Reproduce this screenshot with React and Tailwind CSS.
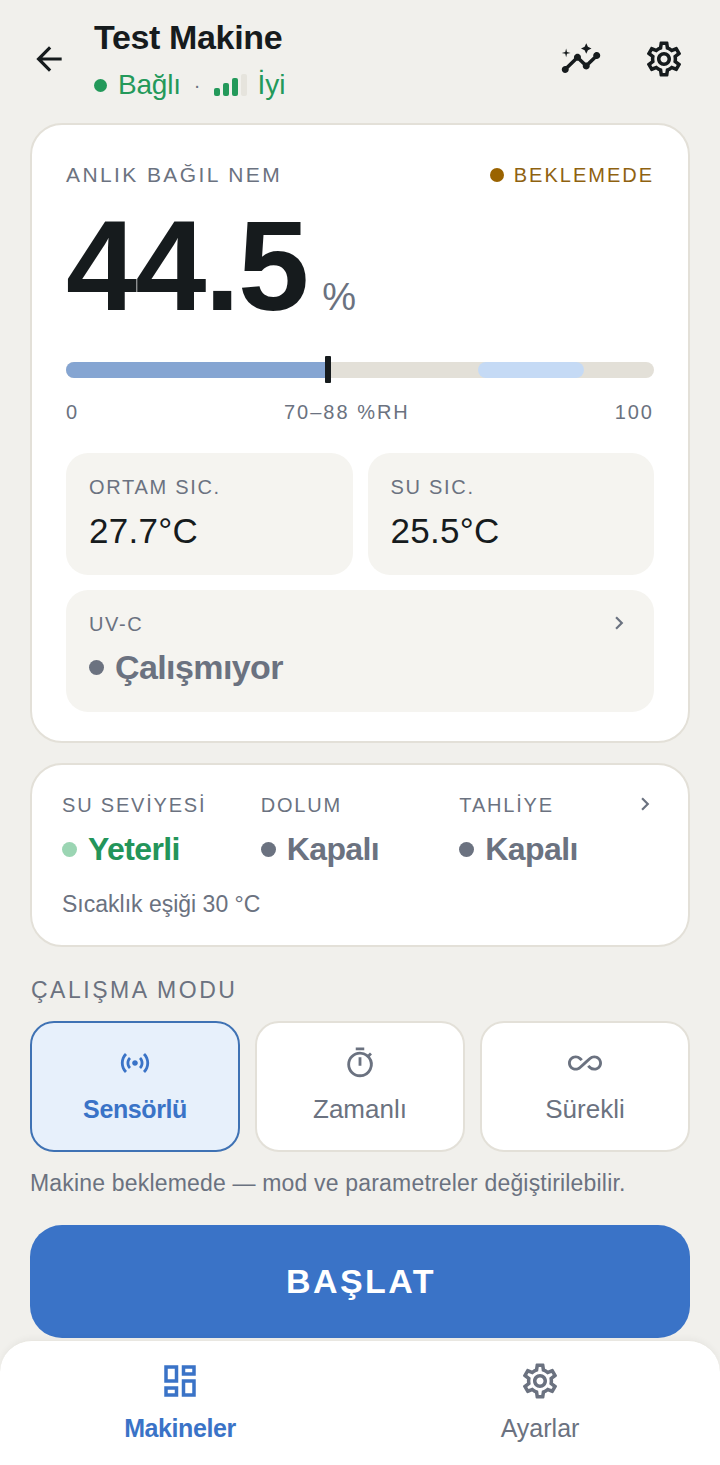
import { MdArrowBack, MdOutlineInsights, MdOutlineSettings, MdOutlineSensors, MdOutlineTimer, MdAllInclusive, MdOutlineDashboard, MdChevronRight } from 'react-icons/md'

const modes = [
  { label: 'Sensörlü', Icon: MdOutlineSensors, active: true },
  { label: 'Zamanlı', Icon: MdOutlineTimer },
  { label: 'Sürekli', Icon: MdAllInclusive },
]

function Status({ label, value, dot, color }) {
  return (
    <div className="flex-1">
      <p className="text-[20px] leading-[24px] tracking-[1.8px] text-[#6b7280]">{label}</p>
      <div className="mt-[13px] flex items-center gap-[11px]">
        <span className={`h-[15px] w-[15px] rounded-full ${dot}`} />
        <span className={`text-[32px] leading-[38px] font-semibold tracking-[-0.6px] ${color}`}>{value}</span>
      </div>
    </div>
  )
}

export default function App() {
  return (
    <div className="relative h-[1465px] w-[720px] overflow-hidden bg-[#f1f0ec] font-['Liberation_Sans',sans-serif] text-[#161b1d]">
      <header className="flex h-[123px] items-start pr-[35px] pl-[30px]">
        <MdArrowBack className="mt-[40px] h-[38px] w-[38px]" />
        <div className="ml-[26px] flex-1 pt-[16px]">
          <h1 className="text-[34px] leading-[42px] font-semibold tracking-[-0.35px]">Test Makine</h1>
          <div className="mt-[9px] flex items-center text-[#23995a]">
            <span className="h-[13px] w-[13px] rounded-full bg-[#23995a]" />
            <span className="ml-[11px] text-[28px] leading-[36px] tracking-[-0.2px]">Bağlı</span>
            <span className="mx-[13px] text-[20px] text-[#6b7280]">·</span>
            <span className="flex h-[22px] items-end gap-[3px]">
              <i className="h-[8px] w-[6px] rounded-[2px] bg-[#23995a]" />
              <i className="h-[13px] w-[6px] rounded-[2px] bg-[#23995a]" />
              <i className="h-[18px] w-[6px] rounded-[2px] bg-[#23995a]" />
              <i className="h-[22px] w-[6px] rounded-[2px] bg-[#e6e4dd]" />
            </span>
            <span className="ml-[11px] text-[28px] leading-[36px]">İyi</span>
          </div>
        </div>
        <MdOutlineInsights className="mt-[38px] h-[42px] w-[42px]" />
        <MdOutlineSettings className="mt-[38px] ml-[41px] h-[42px] w-[42px]" />
      </header>

      <main className="px-[30px]">
        <section className="h-[620px] rounded-[32px] border-2 border-[#e3e0d8] bg-white px-[34px] pt-[36px]">
          <div className="flex items-center justify-between">
            <span className="text-[21px] leading-[28px] tracking-[2.4px] text-[#6b7280]">ANLIK BAĞIL NEM</span>
            <span className="flex items-center gap-[10px] text-[20px] leading-[28px] tracking-[2px] text-[#8f6210]">
              <i className="h-[14px] w-[14px] rounded-full bg-[#9a6300]" />
              BEKLEMEDE
            </span>
          </div>
          <div className="mt-[9px] flex items-baseline">
            <span className="text-[128px] leading-[136px] font-bold tracking-[-2px]">44.5</span>
            <span className="ml-[15px] text-[38px] text-[#6b7280]">%</span>
          </div>

          <div className="relative mt-[28px] h-[16px] rounded-full bg-[#e3e0d8]">
            <div className="absolute inset-y-0 left-0 w-[262px] rounded-l-full bg-[#85a5d2]" />
            <div className="absolute inset-y-0 left-[412px] w-[106px] rounded-full bg-[#c5daf5]" />
            <div className="absolute top-[-6px] left-[259px] h-[27px] w-[6px] rounded-[1px] bg-[#161b1d]" />
          </div>
          <div className="mt-[21px] flex justify-between text-[20px] leading-[26px] tracking-[2px] text-[#6b7280]">
            <span>0</span>
            <span>70–88 %RH</span>
            <span>100</span>
          </div>

          <div className="mt-[28px] grid grid-cols-2 gap-[15px]">
            {[['ORTAM SIC.', '27.7°C'], ['SU SIC.', '25.5°C']].map(([label, value]) => (
              <div key={label} className="h-[122px] rounded-[22px] bg-[#f5f4f0] px-[23px] pt-[21px]">
                <p className="text-[20px] leading-[26px] tracking-[1.7px] text-[#6b7280]">{label}</p>
                <p className="mt-[9px] text-[35px] leading-[44px] tracking-[0.3px]">{value}</p>
              </div>
            ))}
          </div>

          <div className="relative mt-[15px] h-[122px] rounded-[22px] bg-[#f5f4f0] px-[23px] pt-[21px]">
            <p className="text-[20px] leading-[26px] tracking-[1.6px] text-[#6b7280]">UV-C</p>
            <MdChevronRight className="absolute top-[20px] right-[22px] h-[26px] w-[26px] text-[#6b7280]" />
            <div className="mt-[8px] flex items-center gap-[11px]">
              <span className="h-[15px] w-[15px] rounded-full bg-[#6b7280]" />
              <span className="text-[34px] leading-[44px] font-semibold tracking-[-0.6px] text-[#6b7280]">Çalışmıyor</span>
            </div>
          </div>
        </section>

        <section className="relative mt-[20px] h-[184px] rounded-[32px] border-2 border-[#e3e0d8] bg-white px-[30px] pt-[28px]">
          <div className="flex">
            <Status label="SU SEVİYESİ" value="Yeterli" dot="bg-[#9bd5b3]" color="text-[#23955a]" />
            <Status label="DOLUM" value="Kapalı" dot="bg-[#6b7280]" color="text-[#6b7280]" />
            <Status label="TAHLİYE" value="Kapalı" dot="bg-[#6b7280]" color="text-[#6b7280]" />
          </div>
          <MdChevronRight className="absolute top-[26px] right-[30px] h-[26px] w-[26px] text-[#6b7280]" />
          <p className="mt-[21px] text-[23px] leading-[30px] text-[#6b7280]">Sıcaklık eşiği 30 °C</p>
        </section>

        <h2 className="mt-[28px] pl-[1px] text-[23px] leading-[30px] tracking-[2.5px] text-[#6b7280]">ÇALIŞMA MODU</h2>
        <div className="mt-[16px] grid grid-cols-3 gap-[15px]">
          {modes.map(({ label, Icon, active }) => (
            <div
              key={label}
              className={`flex h-[131px] flex-col items-center rounded-[24px] border-2 pt-[23px] ${
                active ? 'border-[#3f72b4] bg-[#e7f0fb] text-[#3a73c7]' : 'border-[#e3e0d8] bg-white text-[#6b7280]'
              }`}
            >
              <Icon className="h-[34px] w-[34px]" />
              <span className={`mt-[12px] leading-[34px] ${active ? 'text-[25px] font-semibold tracking-[-0.4px]' : 'text-[26px]'}`}>{label}</span>
            </div>
          ))}
        </div>
        <p className="mt-[16px] text-[23px] leading-[30px] tracking-[0.18px] text-[#6b7280]">Makine beklemede — mod ve parametreler değiştirilebilir.</p>

        <button className="mt-[27px] h-[113px] w-full rounded-[32px] bg-[#3a73c7] pl-[2px] text-[34px] font-bold tracking-[2.4px] text-white">BAŞLAT</button>
      </main>

      <nav className="absolute inset-x-0 bottom-0 flex h-[125px] rounded-t-[32px] border-t border-[#e9e7e1] bg-white shadow-[0_-2px_6px_rgba(0,0,0,0.04)]">
        <div className="flex flex-1 flex-col items-center pt-[19px] text-[#3a73c7]">
          <MdOutlineDashboard className="h-[42px] w-[42px]" />
          <span className="mt-[8px] text-[25px] leading-[36px] font-semibold tracking-[-0.4px]">Makineler</span>
        </div>
        <div className="flex flex-1 flex-col items-center pt-[19px] text-[#6b7280]">
          <MdOutlineSettings className="h-[42px] w-[42px]" />
          <span className="mt-[8px] text-[25px] leading-[36px]">Ayarlar</span>
        </div>
      </nav>
    </div>
  )
}
